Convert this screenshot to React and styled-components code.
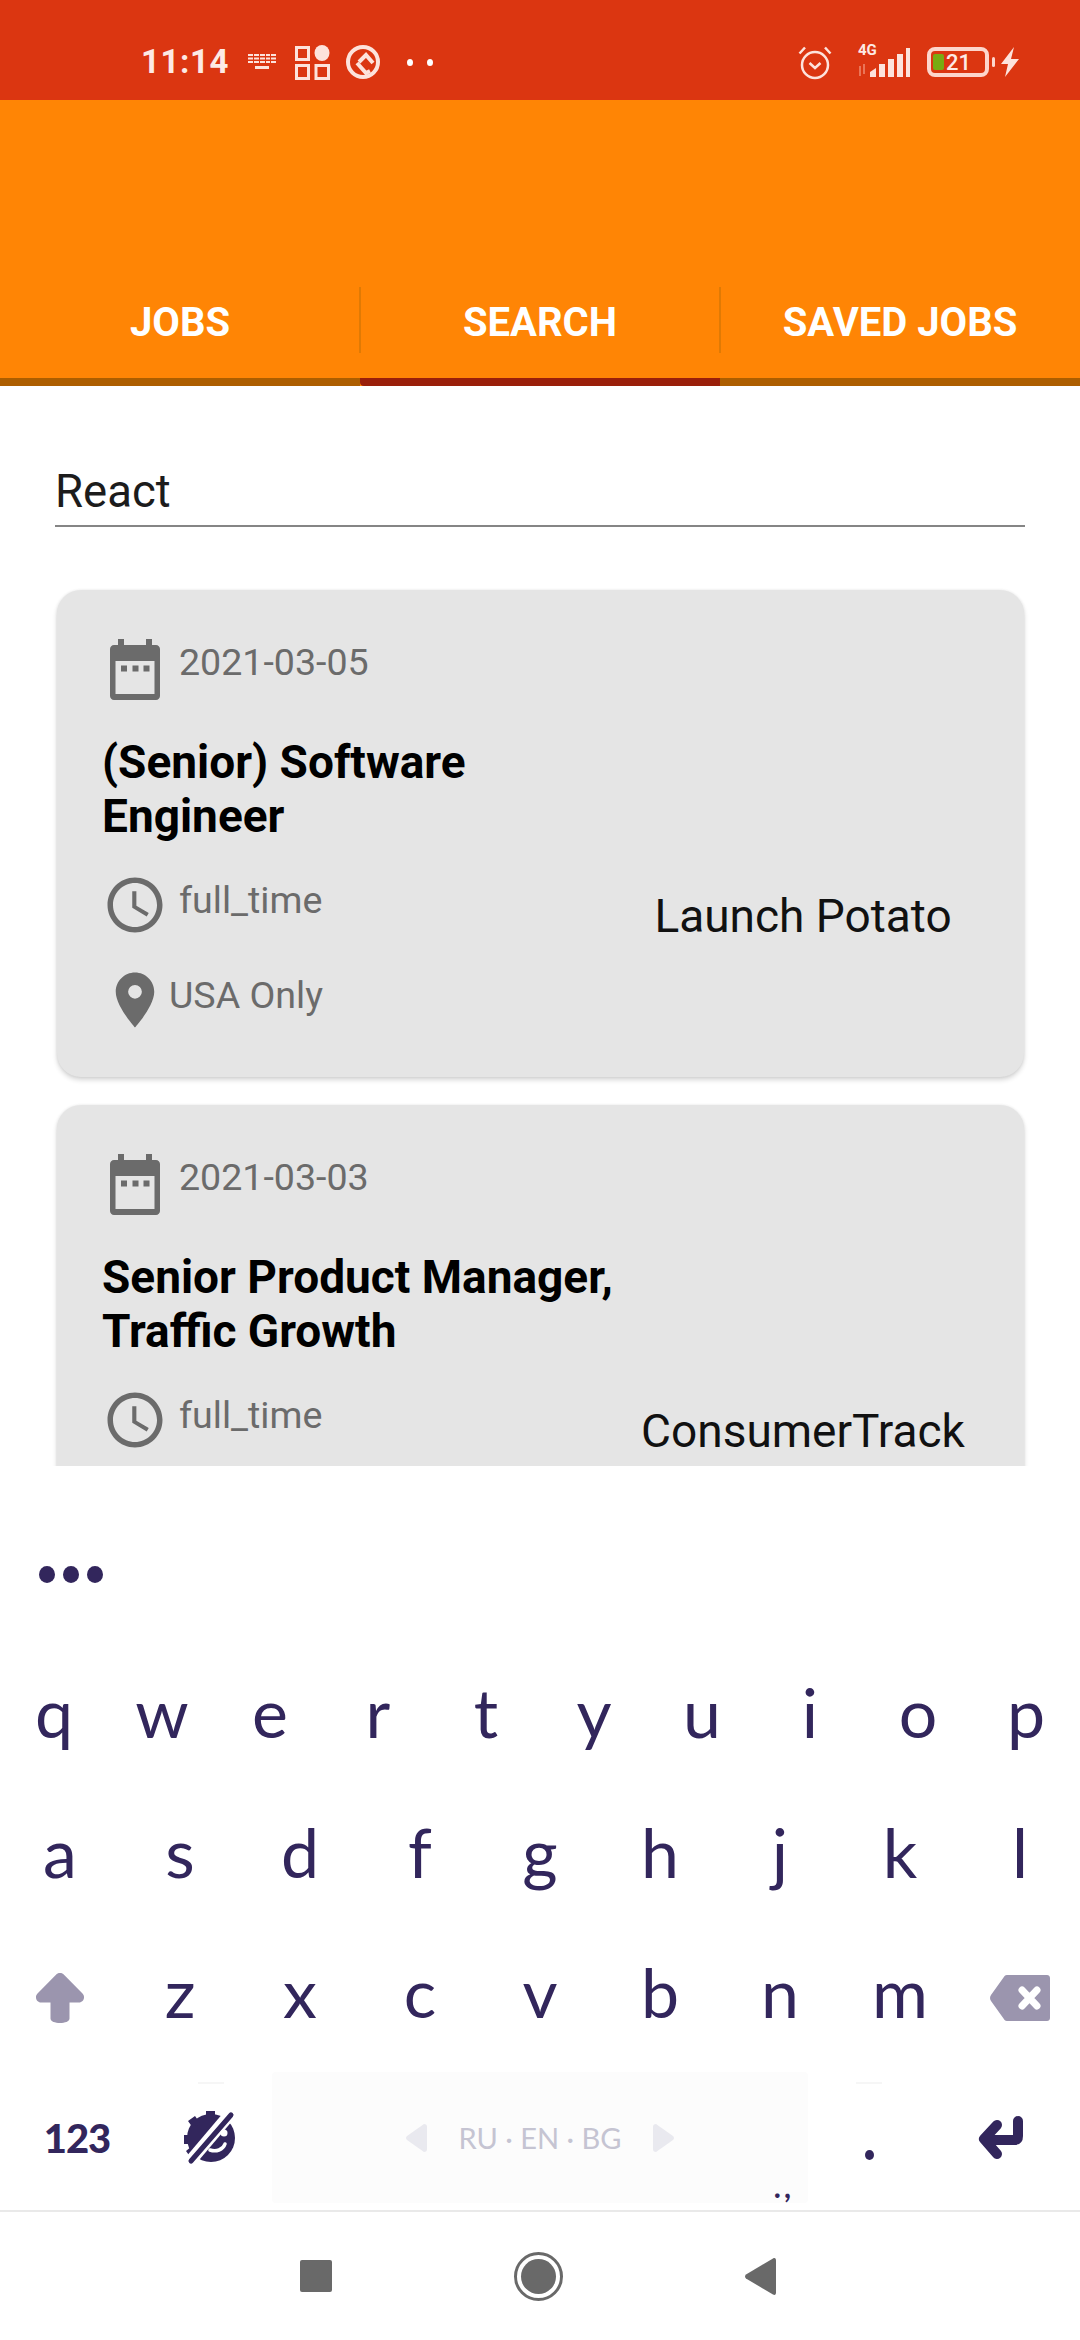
import React from "react";
import styled, { createGlobalStyle } from "styled-components";

const GlobalStyle = createGlobalStyle`
  html, body {
    margin: 0;
    padding: 0;
    background: #fff;
    overflow: hidden;
  }
  * {
    box-sizing: border-box;
  }
`;

const Page = styled.div`
  width: 1080px;
  height: 2340px;
  display: flex;
  flex-direction: column;
  overflow: hidden;
  font-family: Roboto, "Liberation Sans", sans-serif;
`;

/* status bar */
const StatusBar = styled.div`
  height: 100px;
  flex: none;
  display: flex;
  align-items: center;
  justify-content: space-between;
  padding: 24px 60px 0 141px;
  background: #db3611;
  color: #fdeae5;
`;

const StatusGroup = styled.div`
  display: flex;
  align-items: center;
`;

const Time = styled.span`
  font-size: 33px;
  font-weight: 700;
  letter-spacing: 0.6px;
  line-height: 40px;
  margin-right: 19px;
`;

const StatusApps = styled.div`
  display: flex;
  align-items: center;
  gap: 15px;
  margin-left: 19px;
`;

const StatusDots = styled.div`
  display: flex;
  gap: 14px;
  margin-left: 26px;

  i {
    width: 6px;
    height: 7px;
    border-radius: 50%;
    background: #fff;
  }
`;

const NetworkIcons = styled.div`
  position: relative;
  margin-left: 25px;
  display: flex;
`;

const NetworkLabel = styled.span`
  position: absolute;
  left: 1px;
  top: -3px;
  font-size: 15px;
  font-weight: 700;
  line-height: 15px;
  white-space: nowrap;
`;

const Battery = styled.div`
  width: 62px;
  height: 30px;
  border: 4px solid #fdd6cc;
  border-radius: 8px;
  display: flex;
  align-items: center;
  padding-left: 2px;
  gap: 2px;
  margin: 0 11px 0 17px;
  position: relative;
  font-size: 22px;
  font-weight: 500;
  color: #fdeae5;

  &::before {
    content: "";
    width: 11px;
    height: 16px;
    border-radius: 2px;
    background: #78ab12;
  }

  &::after {
    content: "";
    position: absolute;
    right: -10px;
    top: 6px;
    width: 3px;
    height: 10px;
    border-radius: 2px;
    background: #fdd6cc;
  }
`;

/* app bar with tabs */
const AppBar = styled.div`
  height: 286px;
  flex: none;
  display: flex;
  align-items: flex-end;
  background: #ff8505;
`;

const Tab = styled.div`
  flex: 1;
  height: 99px;
  position: relative;
  display: flex;
  align-items: flex-start;
  justify-content: center;
  border-bottom: 8px solid ${(p) => (p.$active ? "#9a1f0a" : "#ad5e00")};
  border-bottom-left-radius: ${(p) => (p.$active ? "4px" : "0")};
  color: #fff;
  font-size: 40px;
  font-weight: 700;
  line-height: 46px;
`;

const TabDivider = styled.span`
  position: absolute;
  left: -1px;
  top: 0;
  width: 2px;
  height: 66px;
  background: #e07a05;
`;

const TabLabel = styled.span`
  margin-top: 13px;
`;

/* search + results */
const Main = styled.div`
  flex: 1;
  min-height: 0;
  overflow: hidden;
  padding: 84px 55px 0 55px;
  background: #fff;
`;

const SearchField = styled.div`
  height: 57px;
  border-bottom: 2px solid #858585;
  font-size: 45.5px;
  line-height: 44px;
  color: #1c1c1c;
`;

const ResultList = styled.div`
  display: flex;
  flex-direction: column;
  gap: 28px;
  margin: 63px 1px 0 2px;
`;

const Card = styled.div`
  flex: none;
  display: flex;
  padding: 44px 51px 44px 45px;
  border-radius: 24px;
  background: #e5e5e5;
  box-shadow: 0 3px 5px rgba(0, 0, 0, 0.16), 0 0 3px rgba(0, 0, 0, 0.08);
`;

const CardInfo = styled.div`
  width: 531px;
  flex: none;
`;

const MetaRow = styled.div`
  display: flex;
  align-items: center;
  height: 66px;
  gap: ${(p) => p.$gap}px;
  margin-top: ${(p) => p.$top || 0}px;
  color: #6b6b6b;
  font-size: 37.6px;
`;

const MetaText = styled.span`
  padding-bottom: 10px;
`;

const IconBox = styled.svg`
  width: 66px;
  height: 66px;
  flex: none;
  fill: #6b6b6b;
`;

const JobTitle = styled.div`
  margin-top: 35px;
  font-size: 46px;
  font-weight: 700;
  line-height: 54px;
  color: #000;
`;

const Company = styled.div`
  flex: 1;
  margin-top: 255px;
  text-align: center;
  font-size: 46px;
  line-height: 54px;
  color: #111;
  white-space: nowrap;
`;

/* keyboard */
const Keyboard = styled.div`
  height: 744px;
  flex: none;
  background: #fff;
  color: #32265c;
  font-family: Lato, "Noto Sans", sans-serif;
`;

const Toolbar = styled.div`
  height: 182px;
  display: flex;
  gap: 8px;
  padding: 100px 0 0 39px;

  i {
    width: 16px;
    height: 17px;
    border-radius: 50%;
    background: #32265c;
  }
`;

const KeyRow = styled.div`
  height: 140px;
  display: grid;
  grid-template-columns: repeat(${(p) => p.$cols}, 1fr);
`;

const Key = styled.div`
  display: flex;
  align-items: center;
  justify-content: center;
`;

const LetterKey = styled(Key)`
  font-size: 68px;
  line-height: 128px;
  padding-bottom: 12px;
`;

const BottomRow = styled.div`
  height: 140px;
  display: grid;
  grid-template-columns: 154px 114px 540px 122px 142px;
`;

const NumbersKey = styled(Key)`
  font-size: 40px;
  font-weight: 900;
  letter-spacing: -1px;
`;

const HintedKey = styled(Key)`
  position: relative;

  &::before {
    content: "";
    position: absolute;
    top: 14px;
    left: 50%;
    width: 26px;
    height: 2px;
    margin-left: -13px;
    background: #f6f6f6;
  }
`;

const SpaceKey = styled.div`
  position: relative;
  margin: 4px 0 5px 4px;
  display: flex;
  align-items: center;
  justify-content: center;
  gap: 32px;
  background: #fcfcfc;
  border-radius: 4px;
  color: #c5c4d2;
  font-size: 29px;
`;

const SpaceHint = styled.span`
  position: absolute;
  right: 14px;
  bottom: 2px;
  font-size: 30px;
  font-weight: 700;
  line-height: 30px;
  letter-spacing: 3px;
  color: #32265c;
`;

const Period = styled.span`
  width: 9px;
  height: 10px;
  margin-top: 33px;
  border-radius: 50%;
  background: #32265c;
`;

/* android nav */
const NavBar = styled.div`
  height: 130px;
  flex: none;
  display: flex;
  align-items: center;
  justify-content: center;
  gap: 182px;
  padding: 0 4px 0 0;
  border-top: 2px solid #e9e9e9;
  background: #fff;
`;

const NavSquare = styled.div`
  width: 32px;
  height: 32px;
  border-radius: 2px;
  background: #696969;
`;

const NavCircle = styled.div`
  width: 49px;
  height: 49px;
  border-radius: 50%;
  border: 3px solid #696969;
  padding: 4px;

  &::after {
    content: "";
    display: block;
    width: 100%;
    height: 100%;
    border-radius: 50%;
    background: #696969;
  }
`;

const CalendarIcon = () => (
  <IconBox viewBox="0 0 66 66">
    <path
      fillRule="evenodd"
      d="M16 12V6h6v6h22V6h6v6h4c2.2 0 4 1.8 4 4v47c0 2.2-1.800 4-4 4H12c-2.200 0-4-1.800-4-4V16c0-2.200 1.800-4 4-4h4zM13.500 28v33h39V28h-39zM19 32.500h6v6h-6zM30.500 32.500h6v6h-6zM41.500 32.500h6v6h-6z"
      transform="translate(0 -1)"
    />
  </IconBox>
);

const ClockIcon = () => (
  <IconBox viewBox="0 0 24 24">
    <path d="M11.990 2C6.470 2 2 6.480 2 12s4.470 10 9.990 10C17.520 22 22 17.520 22 12S17.520 2 11.990 2zM12 20c-4.420 0-8-3.580-8-8s3.580-8 8-8 8 3.580 8 8-3.580 8-8 8zm.500-13H11v6l5.250 3.150.750-1.230-4.500-2.670z" />
  </IconBox>
);

const PinIcon = () => (
  <IconBox viewBox="0 0 24 24">
    <path d="M12 2C8.130 2 5 5.130 5 9c0 5.250 7 13 7 13s7-7.750 7-13c0-3.870-3.130-7-7-7zm0 9.500a2.500 2.500 0 010-5 2.500 2.500 0 010 5z" />
  </IconBox>
);

const KeyboardGlyph = () => (
  <svg width="28" height="16" viewBox="0 0 28 16" fill="#fde3dc">
    <path d="M0 0h5v2H0zM6 0h5v2H6zM12 0h5v2h-5zM18 0h4v2h-4zM23 0h5v2h-5zM0 3.500h5v2H0zM6 3.500h5v2H6zM12 3.500h5v2h-5zM18 3.500h4v2h-4zM23 3.500h5v2h-5zM0 7h5v2H0zM6 7h5v2H6zM12 7h5v2h-5zM18 7h4v2h-4zM23 7h5v2h-5zM7 12h14v3H7z" />
  </svg>
);

const AppsGlyph = () => (
  <svg width="35" height="35" viewBox="0 0 35 35" fill="none" stroke="#fde3dc" strokeWidth="3">
    <rect x="1.500" y="2.500" width="12" height="12" />
    <rect x="1.500" y="20.500" width="12" height="13" />
    <rect x="21" y="20.500" width="12.500" height="13" />
    <ellipse cx="27" cy="8" rx="7.500" ry="8" fill="#fde3dc" stroke="none" />
  </svg>
);

const QGlyph = () => (
  <svg width="36" height="35" viewBox="0 0 36 35" fill="none" stroke="#fde3dc">
    <circle cx="18" cy="17" r="15" strokeWidth="4" />
    <path d="M14 17l7-7 7 8M12 18l9 10 4-2" strokeWidth="4" />
  </svg>
);

const AlarmGlyph = () => (
  <svg width="34" height="35" viewBox="0 0 34 35" fill="none" stroke="#fde3dc" strokeWidth="2.500">
    <circle cx="17" cy="20" r="13" />
    <path d="M1.500 8.500L7 2.500M32.500 8.500L27 2.500M11.500 18l5.500 5 5.500-5" />
  </svg>
);

const SignalGlyph = () => (
  <svg width="53" height="32" viewBox="0 0 53 32" fill="#fde3dc">
    <path d="M13 31v-5l6-4v9zM22 31V18h6v13zM31 31V13h6v18zM40 31V8h6v23zM49 31V2h4v29z" />
    <path d="M3 20v10M7 18v10" stroke="#f08a70" strokeWidth="1.500" />
  </svg>
);

const BoltGlyph = () => (
  <svg width="20" height="30" viewBox="0 0 20 30" fill="#fde3dc">
    <path d="M14 0L1 17h7L5 30l14-18h-8z" />
  </svg>
);

const ShiftGlyph = () => (
  <svg width="50" height="50" viewBox="0 0 50 50" fill="#9b95ae">
    <path d="M25 0c1.800 0 3 .7 4 1.700l18.500 18.800c3.500 3.800.5 9-3.500 9h-9.500v16c0 6-19 6-19 0v-16H6c-4 0-7-5.200-3.500-9L21 1.700C22 .7 23.200 0 25 0z" />
  </svg>
);

const BackspaceGlyph = () => (
  <svg width="60" height="46" viewBox="0 0 60 46">
    <path fill="#9b95ae" d="M17 0h40c1.700 0 3 1.300 3 3v40c0 1.700-1.300 3-3 3H17c-1 0-1.800-.4-2.400-1.100L1 26c-1.300-1.800-1.300-4.200 0-6L14.600 1.100C15.200.4 16 0 17 0z" />
    <path stroke="#fff" strokeWidth="7" strokeLinecap="round" d="M32 15l15 16M47 15L32 31" />
  </svg>
);

const EmojiGlyph = () => (
  <svg width="54" height="54" viewBox="0 0 54 54" fill="#32265c">
    <circle cx="27" cy="27" r="24" />
    <path d="M22 0h9v8h-9zM4 10l7-5 5 7-7 5zM0 24h7v9H0zM2 40l6-5 5 7-6 5z" />
    <path stroke="#fff" strokeWidth="12" d="M3 54L47 2" />
    <path stroke="#32265c" strokeWidth="5" strokeLinecap="round" d="M7 50L47 4" />
    <circle cx="40" cy="22" r="3.500" fill="#fff" />
    <path d="M26 39c6 2 13 0 15-6" fill="none" stroke="#fff" strokeWidth="3.500" strokeLinecap="round" />
  </svg>
);

const EnterGlyph = () => (
  <svg width="46" height="44" viewBox="0 0 46 44" fill="none" stroke="#32265c" strokeWidth="10" strokeLinecap="round" strokeLinejoin="round">
    <path d="M40 5v15c0 3-1 4-4 4H7M19 9L6 23l13 15" />
  </svg>
);

const ArrowGlyph = ({ flip }) => (
  <svg width="21" height="28" viewBox="0 0 21 28" fill="#e9e9ef">
    <path d={flip ? "M3 0c-2 0-3 1-3 3v22c0 2 1 3 3 3L20 16c1.300-1 1.300-3 0-4z" : "M18 0c2 0 3 1 3 3v22c0 2-1 3-3 3L1 16c-1.300-1-1.300-3 0-4z"} />
  </svg>
);

const TriangleGlyph = () => (
  <svg width="31" height="37" viewBox="0 0 31 37" fill="#696969">
    <path d="M28 .5c2-1 3 0 3 2v32c0 2-1 3-3 2L1 20.500c-1.300-1-1.300-3 0-4z" />
  </svg>
);

const JOBS = [
  {
    date: "2021-03-05",
    title: ["(Senior) Software", "Engineer"],
    type: "full_time",
    place: "USA Only",
    company: "Launch Potato",
  },
  {
    date: "2021-03-03",
    title: ["Senior Product Manager,", "Traffic Growth"],
    type: "full_time",
    company: "ConsumerTrack",
  },
];

const ROW_ONE = ["q", "w", "e", "r", "t", "y", "u", "i", "o", "p"];
const ROW_TWO = ["a", "s", "d", "f", "g", "h", "j", "k", "l"];
const ROW_THREE = ["z", "x", "c", "v", "b", "n", "m"];

const App = () => {
  return (
    <Page>
      <GlobalStyle />

      <StatusBar>
        <StatusGroup>
          <Time>11:14</Time>
          <KeyboardGlyph />
          <StatusApps>
            <AppsGlyph />
            <QGlyph />
          </StatusApps>
          <StatusDots>
            <i />
            <i />
          </StatusDots>
        </StatusGroup>
        <StatusGroup>
          <AlarmGlyph />
          <NetworkIcons>
            <SignalGlyph />
            <NetworkLabel>4G</NetworkLabel>
          </NetworkIcons>
          <Battery>21</Battery>
          <BoltGlyph />
        </StatusGroup>
      </StatusBar>

      <AppBar>
        <Tab>
          <TabLabel>JOBS</TabLabel>
        </Tab>
        <Tab $active>
          <TabDivider />
          <TabLabel>SEARCH</TabLabel>
        </Tab>
        <Tab>
          <TabDivider />
          <TabLabel>SAVED JOBS</TabLabel>
        </Tab>
      </AppBar>

      <Main>
        <SearchField>React</SearchField>
        <ResultList>
          {JOBS.map((job) => (
            <Card key={job.date}>
              <CardInfo>
                <MetaRow $gap={11}>
                  <CalendarIcon />
                  <MetaText>{job.date}</MetaText>
                </MetaRow>
                <JobTitle>
                  {job.title[0]}
                  <br />
                  {job.title[1]}
                </JobTitle>
                <MetaRow $gap={11} $top={29}>
                  <ClockIcon />
                  <MetaText>{job.type}</MetaText>
                </MetaRow>
                {job.place && (
                  <MetaRow $gap={1} $top={29}>
                    <PinIcon />
                    <MetaText>{job.place}</MetaText>
                  </MetaRow>
                )}
              </CardInfo>
              <Company>{job.company}</Company>
            </Card>
          ))}
        </ResultList>
      </Main>

      <Keyboard>
        <Toolbar>
          <i />
          <i />
          <i />
        </Toolbar>
        <KeyRow $cols={10}>
          {ROW_ONE.map((k) => (
            <LetterKey key={k}>{k}</LetterKey>
          ))}
        </KeyRow>
        <KeyRow $cols={9}>
          {ROW_TWO.map((k) => (
            <LetterKey key={k}>{k}</LetterKey>
          ))}
        </KeyRow>
        <KeyRow $cols={9}>
          <Key>
            <ShiftGlyph />
          </Key>
          {ROW_THREE.map((k) => (
            <LetterKey key={k}>{k}</LetterKey>
          ))}
          <Key>
            <BackspaceGlyph />
          </Key>
        </KeyRow>
        <BottomRow>
          <NumbersKey>123</NumbersKey>
          <HintedKey>
            <EmojiGlyph />
          </HintedKey>
          <SpaceKey>
            <ArrowGlyph />
            <span>RU · EN · BG</span>
            <ArrowGlyph flip />
            <SpaceHint>.,</SpaceHint>
          </SpaceKey>
          <HintedKey>
            <Period />
          </HintedKey>
          <Key>
            <EnterGlyph />
          </Key>
        </BottomRow>
      </Keyboard>

      <NavBar>
        <NavSquare />
        <NavCircle />
        <TriangleGlyph />
      </NavBar>
    </Page>
  );
};

export default App;
